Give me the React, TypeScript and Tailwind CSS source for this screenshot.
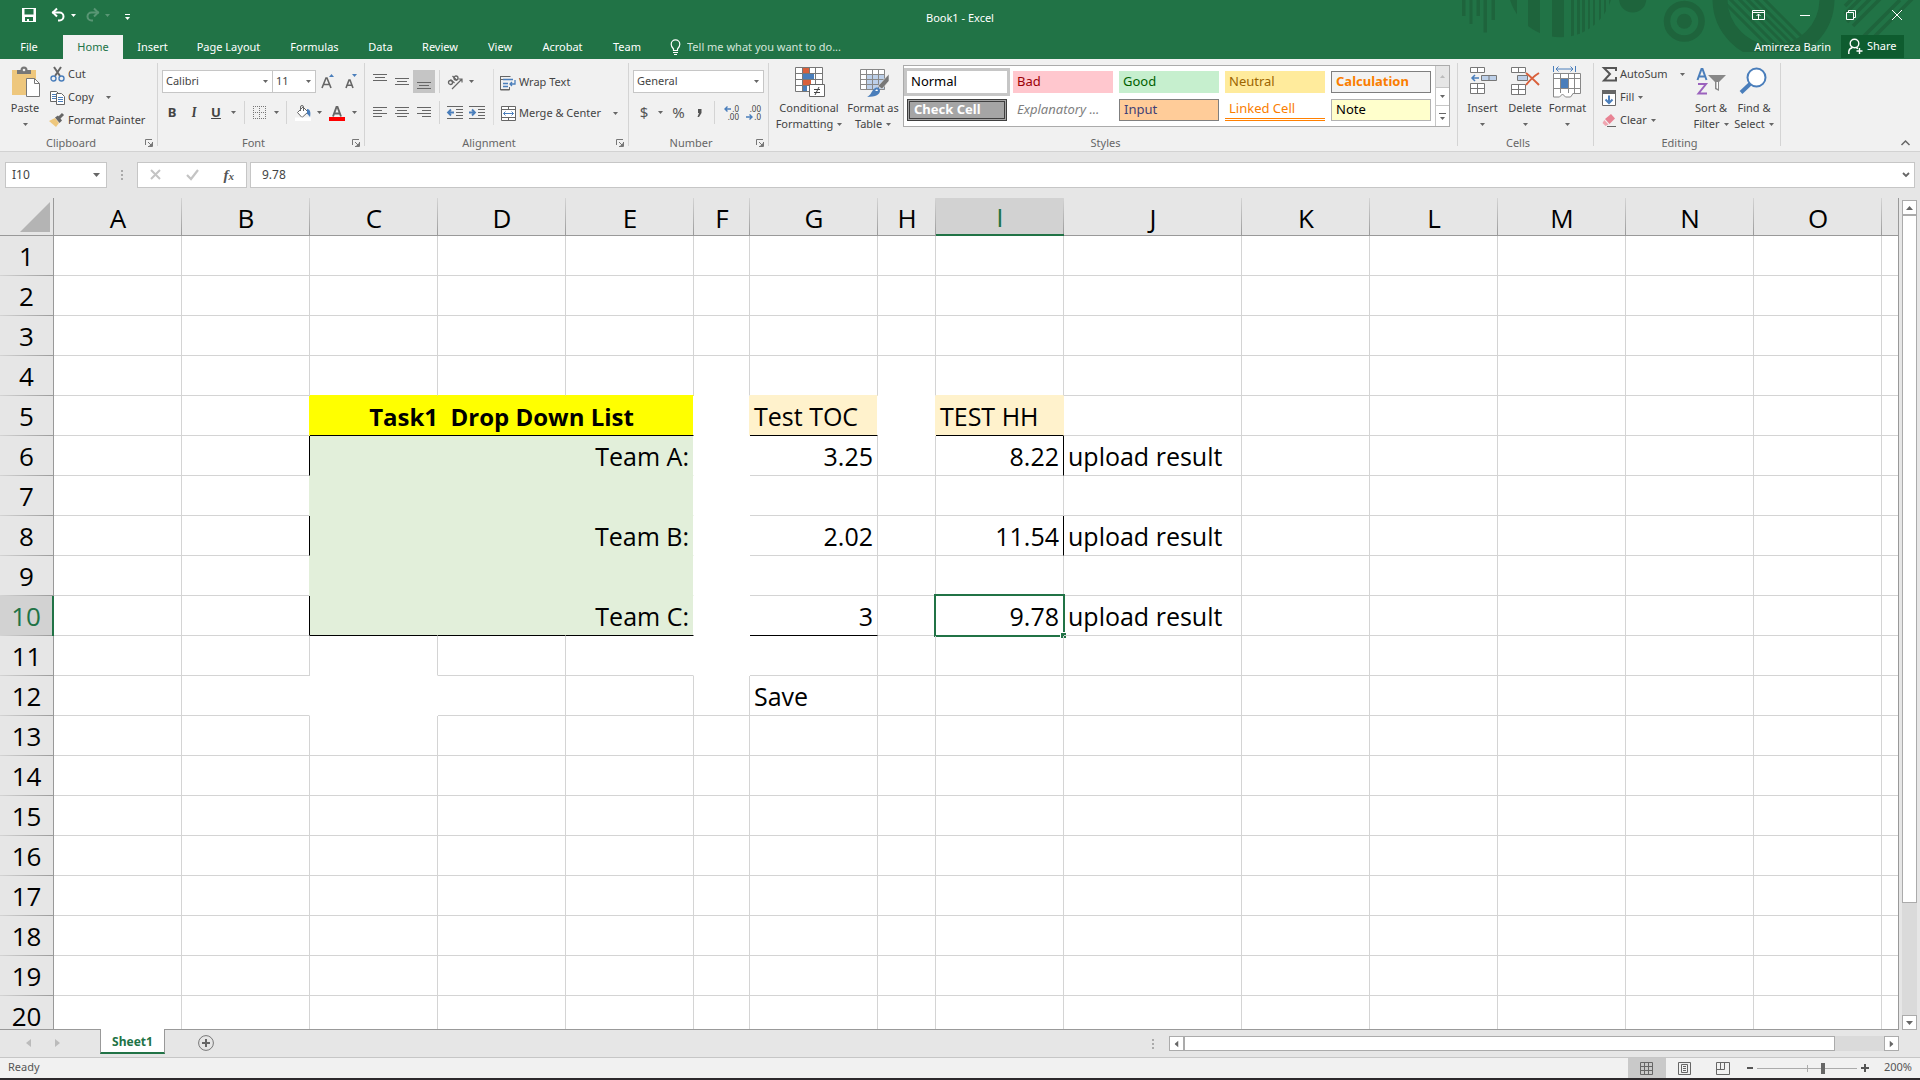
import React from 'react';
import type { ReactNode } from 'react';

/* ---------- small shared parts ---------- */

function Caret({ className = 'text-[#666]' }: { className?: string }) {
  return (
    <svg viewBox="0 0 5 3" className={`h-[3px] w-[5px] shrink-0 ${className}`} fill="currentColor" aria-hidden="true">
      <path d="M0 0h5L2.5 3z" />
    </svg>
  );
}

function Icon({ w, h, children }: { w: number; h: number; children: ReactNode }) {
  return (
    <svg width={w} height={h} viewBox={`0 0 ${w} ${h}`} fill="none" className="shrink-0 overflow-visible" aria-hidden="true">
      {children}
    </svg>
  );
}

function Tool({ label, className, children }: { label: string; className: string; children: ReactNode }) {
  return (
    <button type="button" aria-label={label} className={`flex h-[23px] shrink-0 items-center justify-center ${className}`}>
      {children}
    </button>
  );
}

function Sep({ className }: { className: string }) {
  return (
    <span className={`flex h-[23px] shrink-0 justify-center ${className}`}>
      <span className="w-px bg-[#d4d4d4]" />
    </span>
  );
}

function Group({
  name,
  width,
  launcher = false,
  children,
}: {
  name: string;
  width: string;
  launcher?: boolean;
  children: ReactNode;
}) {
  return (
    <section aria-label={name} className={`relative flex shrink-0 flex-col ${width}`}>
      <div className="flex h-[76px]">{children}</div>
      <div className="flex h-[16px] items-center justify-center pr-4 text-[#666]">{name}</div>
      {launcher && (
        <button type="button" aria-label={`${name} settings`} className="absolute right-[5px] bottom-[4px]">
          <Icon w={8} h={8}>
            <path d="M.5 6V.5H7M3 3l3 3M7.5 3v4.5H3" stroke="#777" />
            <path d="M7 4v3H4z" fill="#777" />
          </Icon>
        </button>
      )}
      <span className="absolute top-[4px] right-0 bottom-[5px] w-px bg-[#d4d4d4]" />
    </section>
  );
}

function BigButton({ icon, lines, width }: { icon: ReactNode; lines: string[]; width: string }) {
  return (
    <button type="button" className={`flex shrink-0 flex-col items-center pt-[8px] leading-4 whitespace-nowrap ${width}`}>
      <span className="mb-[3px] flex h-[30px] items-center justify-center">{icon}</span>
      <span>{lines[0]}</span>
      <span className="flex h-4 items-center gap-1">
        {lines[1]}
        <Caret />
      </span>
    </button>
  );
}

function RowButton({ icon, text, caret, gap = 'gap-1' }: { icon: ReactNode; text: string; caret?: boolean; gap?: string }) {
  return (
    <button type="button" className={`flex h-[23px] items-center whitespace-nowrap ${gap}`}>
      <span className="flex items-center gap-[3px]">
        <span className="flex w-4 justify-center">{icon}</span>
        {text}
      </span>
      {caret && <Caret />}
    </button>
  );
}

function Combo({ label, value, className }: { label: string; value: string; className: string }) {
  return (
    <span className={`relative flex h-[23px] shrink-0 items-center border border-[#c6c6c6] bg-white ${className}`}>
      <select aria-label={label} className="h-full w-full appearance-none bg-transparent pl-[3px] text-[#444]">
        <option>{value}</option>
      </select>
      <span className="pointer-events-none absolute right-[4px]">
        <Caret />
      </span>
    </span>
  );
}

function Lines({ d }: { d: string }) {
  return (
    <Icon w={15} h={15}>
      <path d={d} stroke="#666" />
    </Icon>
  );
}

/* ---------- title bar and tabs ---------- */

function TitleArt() {
  const stripes: [number, number][] = [
    [90, 7], [108, 12], [132, 12], [151, 3], [157, 3], [162, 3], [168, 2], [173, 2], [179, 2], [184, 2], [189, 2],
  ];
  return (
    <svg width="500" height="59" viewBox="0 0 500 59" className="pointer-events-none absolute top-0 right-0" aria-hidden="true">
      <defs>
        <clipPath id="disc"><circle cx="140.5" cy="-15.5" r="52.7" /></clipPath>
        <clipPath id="ring"><rect x="290" width="130" height="52" /></clipPath>
        <clipPath id="hole"><circle cx="353.5" cy="-1" r="46" /></clipPath>
      </defs>
      <g fill="#1e643c">
        <path d="M42 0h3.500v16H42zM49.500 0h3v24h-3zM56.500 0h3.500v16h-3.500zM63.500 0h3.500v32.500h-3.500zM71.500 0h3.500v20h-3.500z" />
        <g clipPath="url(#disc)">
          {stripes.map(([x, w]) => <rect key={x} x={x} width={w} height="40" />)}
        </g>
        <circle cx="212.700" cy="-1" r="13.600" />
        <circle cx="264.300" cy="21.300" r="7.500" />
      </g>
      <g stroke="#1e643c" fill="none">
        <circle cx="264.300" cy="21.300" r="17.300" strokeWidth="6.500" />
        <circle cx="353.500" cy="-1" r="53.500" strokeWidth="15" clipPath="url(#ring)" />
        <g clipPath="url(#hole)" strokeWidth="3">
          <path d="M300 -2l56 56M307 -4l56 56M316 -4l52 52M324 -4l50 50M332 -4l50 50M341 -4l50 50" />
        </g>
        <path d="M425 6l8-8M425 14l16-16M427 22l24-24M433 26l29-29" strokeWidth="3.500" />
        <path d="M442 38l38-38M455 36l38-38" strokeWidth="3.500" />
      </g>
    </svg>
  );
}

const tabs: [string, string][] = [
  ['Home', 'w-[60px] bg-[#f1f1f1] text-[#217346]'],
  ['Insert', 'w-[59px]'],
  ['Page Layout', 'w-[93px]'],
  ['Formulas', 'w-[79px]'],
  ['Data', 'w-[53px]'],
  ['Review', 'w-[66px]'],
  ['View', 'w-[54px]'],
  ['Acrobat', 'w-[71px]'],
  ['Team', 'w-[58px]'],
];

function TitleBar() {
  return (
    <header className="relative shrink-0 bg-[#217346] text-white">
      <TitleArt />
      <div className="relative grid h-[35px] grid-cols-3">
        <div className="flex items-start pt-[8px] pl-[22px]">
          <button type="button" aria-label="Save">
            <Icon w={14} h={14}>
              <path d="M0 0h14v14H0zM2.500 1v5.500h9V1zM3 9v4h2v-2h2v2h4V9z" fill="#fff" fillRule="evenodd" />
            </Icon>
          </button>
          <button type="button" aria-label="Undo" className="ml-[15px] flex">
            <Icon w={15} h={14}>
              <path d="M1 4.500h7.500a4 4 0 0 1 0 8H7" stroke="#fff" strokeWidth="2" />
              <path d="M6 .5L2 4.500l4 4" stroke="#fff" strokeWidth="2" />
            </Icon>
            <span className="mt-[6px] ml-[5px]"><Caret className="text-white" /></span>
          </button>
          <button type="button" aria-label="Redo" className="ml-[9px] flex opacity-25">
            <Icon w={15} h={14}>
              <path d="M14 4.500H6.500a4 4 0 0 0 0 8H8" stroke="#fff" strokeWidth="2" />
              <path d="M9 .5l4 4-4 4" stroke="#fff" strokeWidth="2" />
            </Icon>
            <span className="mt-[6px] ml-[5px]"><Caret className="text-white" /></span>
          </button>
          <button type="button" aria-label="Customize Quick Access Toolbar" className="mt-[6px] ml-[15px] flex flex-col gap-[2px]">
            <span className="h-px w-[5px] bg-white" />
            <Caret className="text-white" />
          </button>
        </div>
        <h1 className="self-center pt-px text-center text-[11px]">Book1 - Excel</h1>
        <div className="flex items-start justify-end pt-[8px] pr-[18px]">
          <button type="button" aria-label="Ribbon Display Options" className="flex w-[47px] justify-center">
            <Icon w={14} h={14}>
              <path d="M.5 2.500h12v9H.5zM.5 4.500h12M6.500 11V6M4.500 8l2-2 2 2" stroke="#fff" />
            </Icon>
          </button>
          <button type="button" aria-label="Minimize" className="flex w-[46px] justify-center">
            <Icon w={10} h={14}><path d="M0 7.500h10" stroke="#fff" /></Icon>
          </button>
          <button type="button" aria-label="Restore" className="flex w-[46px] justify-center">
            <Icon w={10} h={14}><path d="M.5 4.500h7v7h-7zM2.500 4V2.500h7v7H8" stroke="#fff" /></Icon>
          </button>
          <button type="button" aria-label="Close" className="ml-[18px] flex w-[10px] justify-center">
            <Icon w={10} h={14}><path d="M0 2l10 10M10 2L0 12" stroke="#fff" /></Icon>
          </button>
        </div>
      </div>
      <div className="relative flex h-[24px]">
        <nav aria-label="Ribbon tabs" className="flex">
          <button type="button" className="w-[63px] pr-[5px]">File</button>
          {tabs.map(([name, cls]) => (
            <button key={name} type="button" className={`shrink-0 ${cls}`}>{name}</button>
          ))}
        </nav>
        <label className="flex items-center gap-[6px] pl-[14px]">
          <Icon w={11} h={16}>
            <path d="M3.500 11.500V10C2 8.500 1.200 7 1.200 5.200a4.300 4.300 0 0 1 8.600 0C9.800 7 9 8.500 7.500 10v1.500zM3 13.500h5M4 15.500h3" stroke="#fff" strokeWidth="1.200" />
          </Icon>
          <input aria-label="Tell me what you want to do" placeholder="Tell me what you want to do..." className="w-[170px] bg-transparent placeholder:text-[#d3e5da] placeholder:opacity-100" />
        </label>
        <div className="ml-auto flex items-center pr-4">
          <button type="button" className="mr-[10px]">Amirreza Barin</button>
          <button type="button" className="flex h-[23px] w-[63px] items-center gap-[4px] self-start bg-[#0e5c2f] pl-[7px]">
            <Icon w={15} h={17}>
              <circle cx="6.500" cy="5.500" r="4.300" stroke="#fff" strokeWidth="1.400" />
              <path d="M.8 16v-2.500C1 11.500 2.500 10 4.500 9.500M8 9.500l2 1M11.500 10v6M8.500 13h6" stroke="#fff" strokeWidth="1.400" />
            </Icon>
            Share
          </button>
        </div>
      </div>
    </header>
  );
}

/* ---------- ribbon ---------- */

function ClipboardGroup() {
  return (
    <Group name="Clipboard" width="w-[158px]" launcher>
      <BigButton
        width="w-[49px] pl-px"
        lines={['Paste', '']}
        icon={
          <Icon w={28} h={30}>
            <path d="M1 3h24v25H1z" fill="#eec77d" />
            <path d="M6 7V3h3.500a3.500 3.500 0 0 1 7 0H20v4z" fill="#777" />
            <circle cx="13" cy="3" r="1.300" fill="#f1f1f1" />
            <path d="M15.500 11.500h8l5 5v13h-13z" fill="#fff" stroke="#777" />
            <path d="M23.500 11.500v5h5" stroke="#777" />
          </Icon>
        }
      />
      <div className="flex flex-col items-start pt-[4px]">
        <RowButton
          text="Cut"
          icon={
            <Icon w={15} h={15}>
              <path d="M4 0l6 9M11 0L5 9" stroke="#666" strokeWidth="2" />
              <circle cx="3.500" cy="11.500" r="2.500" stroke="#4a7ebb" strokeWidth="1.400" />
              <circle cx="11.500" cy="11.500" r="2.500" stroke="#4a7ebb" strokeWidth="1.400" />
            </Icon>
          }
        />
        <RowButton
          text="Copy"
          caret
          gap="gap-[12px]"
          icon={
            <Icon w={15} h={15}>
              <path d="M.5 1.500h6l2 2v8h-8z" fill="#fff" stroke="#666" />
              <path d="M2 4.500h4M2 6.500h4M2 8.500h4" stroke="#4a7ebb" />
              <path d="M6.500 3.500h5l3 3v8h-8z" fill="#fff" stroke="#666" />
              <path d="M8 7.500h5M8 9.500h5M8 11.500h5" stroke="#4a7ebb" />
            </Icon>
          }
        />
        <RowButton
          text="Format Painter"
          icon={
            <Icon w={16} h={15}>
              <path d="M0 8l6-3 4 5-3 4z" fill="#eec77d" />
              <path d="M6 4.500l3-2 4 5-2.500 2.500z" fill="#666" />
              <path d="M10 5l4-4" stroke="#666" strokeWidth="3" />
            </Icon>
          }
        />
      </div>
    </Group>
  );
}

function FontGroup() {
  return (
    <Group name="Font" width="w-[207px]" launcher>
      <div className="flex flex-col gap-[8px] pt-[11px] pl-[3px]">
        <div className="flex pl-px">
          <Combo label="Font" value="Calibri" className="w-[111px]" />
          <Combo label="Font size" value="11" className="-ml-px w-[44px]" />
          <Tool label="Increase font size" className="w-[24px]">
            <Icon w={14} h={15}>
              <path d="M1 14L5 4h1l4 10M2.500 10.500h6" stroke="#666" strokeWidth="1.600" />
              <path d="M8 3h5L10.500 0z" fill="#4a7ebb" />
            </Icon>
          </Tool>
          <Tool label="Decrease font size" className="w-[22px]">
            <Icon w={14} h={15}>
              <path d="M2 14l3-8h1l3 8M3 11.200h5" stroke="#666" strokeWidth="1.600" />
              <path d="M8 0h5l-2.500 3z" fill="#4a7ebb" />
            </Icon>
          </Tool>
        </div>
        <div className="flex text-[13px]">
          <Tool label="Bold" className="w-[22px] font-bold">B</Tool>
          <Tool label="Italic" className="w-[22px] font-serif font-bold italic">I</Tool>
          <Tool label="Underline" className="w-[22px] font-bold underline">U</Tool>
          <Tool label="Underline options" className="w-[13px]"><Caret /></Tool>
          <Sep className="w-[8px]" />
          <Tool label="Borders" className="w-[23px]">
            <Icon w={13} h={13}>
              <path d="M0 .5h13M0 6.500h13M0 12.500h13M.5 0v13M6.500 0v13M12.500 0v13" stroke="#777" strokeDasharray="1 1" />
            </Icon>
          </Tool>
          <Tool label="Border options" className="w-[10px]"><Caret /></Tool>
          <Sep className="w-[11px]" />
          <Tool label="Fill color" className="w-[22px]">
            <Icon w={16} h={16}>
              <path d="M2.500 7.500L8 2l5 5-6 5.500z" fill="#fff" stroke="#666" />
              <path d="M5.500 6V2a1.500 1.500 0 0 1 3 0v4" stroke="#666" />
              <path d="M12 4c3 0 4 3 3 8-1-1-2-3-3-3z" fill="#4a7ebb" />
              <path d="M0 12.500h16V16H0z" fill="#fff" />
            </Icon>
          </Tool>
          <Tool label="Fill color options" className="w-[11px]"><Caret /></Tool>
          <Tool label="Font color" className="w-[24px]">
            <Icon w={16} h={16}>
              <path d="M4 11.500L7.500 2h1L12 11.500M5.500 8.500h5" stroke="#666" strokeWidth="1.900" />
              <path d="M0 12h16v4H0z" fill="#f00" />
            </Icon>
          </Tool>
          <Tool label="Font color options" className="w-[10px]"><Caret /></Tool>
        </div>
      </div>
    </Group>
  );
}

function AlignmentGroup() {
  return (
    <Group name="Alignment" width="w-[264px]" launcher>
      <div className="flex w-[128px] flex-col gap-[8px] pt-[11px] pl-[4px]">
        <div className="flex">
          <Tool label="Top align" className="w-[22px]"><Lines d="M0 .5h14M2 3.500h10M0 6.500h14" /></Tool>
          <Tool label="Middle align" className="w-[22px]"><Lines d="M0 4.500h14M2 7.500h10M0 10.500h14" /></Tool>
          <Tool label="Bottom align" className="w-[22px] bg-[#c5c5c5]"><Lines d="M0 8.500h14M2 11.500h10M0 14.500h14" /></Tool>
          <Sep className="w-[8px]" />
          <Tool label="Orientation" className="w-[24px]">
            <Icon w={16} h={16}>
              <g stroke="#666" strokeWidth="1.300">
                <circle cx="3.500" cy="8.500" r="2" />
                <path d="M3.500 5.500l4 3.500M5.500 2l4.500 4.500" />
                <circle cx="9" cy="4" r="2" />
              </g>
              <path d="M5 15L15 5M11.500 5H15v3.500" stroke="#666" strokeWidth="1.200" />
            </Icon>
          </Tool>
          <Tool label="Orientation options" className="w-[8px]"><Caret /></Tool>
        </div>
        <div className="flex">
          <Tool label="Align left" className="w-[22px]"><Lines d="M0 2.500h14M0 5.500h9M0 8.500h14M0 11.500h9" /></Tool>
          <Tool label="Center" className="w-[22px]"><Lines d="M0 2.500h14M2 5.500h10M0 8.500h14M2 11.500h10" /></Tool>
          <Tool label="Align right" className="w-[22px]"><Lines d="M0 2.500h14M5 5.500h9M0 8.500h14M5 11.500h9" /></Tool>
          <Sep className="w-[8px]" />
          <Tool label="Decrease indent" className="w-[24px]">
            <Icon w={16} h={13}>
              <path d="M0 .5h16M9 3.500h7M9 6.500h7M9 9.500h7M0 12.500h16" stroke="#666" />
              <path d="M7 6.500H2M4 3.500l-3 3 3 3" stroke="#4a7ebb" strokeWidth="1.800" />
            </Icon>
          </Tool>
          <Tool label="Increase indent" className="w-[20px]">
            <Icon w={16} h={13}>
              <path d="M0 .5h16M9 3.500h7M9 6.500h7M9 9.500h7M0 12.500h16" stroke="#666" />
              <path d="M0 6.500h5M3 3.500l3 3-3 3" stroke="#4a7ebb" strokeWidth="1.800" />
            </Icon>
          </Tool>
        </div>
      </div>
      <div className="mt-[10px] mb-[10px] flex w-[134px] flex-col gap-[8px] border-l border-[#dcdcdc] pt-[2px] pl-[6px]">
        <RowButton
          text="Wrap Text"
          icon={
            <Icon w={16} h={16}>
              <path d="M.5 1.500h10M.5 4.500h10M.5 1v14h9v-3M.5 14.500h9" stroke="#666" />
              <path d="M3 4.500h10M3 8.500h5M3 11.500h5" stroke="#4a7ebb" strokeWidth="1.300" />
              <path d="M15 5v4h-5M12 7l-2 2 2 2" stroke="#4a7ebb" strokeWidth="1.300" />
            </Icon>
          }
        />
        <RowButton
          text="Merge & Center"
          caret
          gap="gap-[12px]"
          icon={
            <Icon w={15} h={15}>
              <path d="M.5.5h14v14H.5zM.5 3.500h14M.5 11.500h14M7.500 0v3.500M7.500 11.500V15" fill="#fff" stroke="#666" />
              <path d="M2.500 7.500h10M4.500 5.500l-2 2 2 2M10.500 5.500l2 2-2 2" stroke="#4a7ebb" />
            </Icon>
          }
        />
      </div>
    </Group>
  );
}

function DecimalTool({ label, dir }: { label: string; dir: 'left' | 'right' }) {
  const left = dir === 'left';
  return (
    <button type="button" aria-label={label} className="flex h-[23px] w-[22px] shrink-0 flex-col justify-center text-[8px] leading-[8px] text-[#444]">
      <span className="flex w-full items-center justify-end gap-px pr-[3px]">
        {left && <Icon w={7} h={6}><path d="M1 3h6M3.500 .5L1 3l2.500 2.500" stroke="#4a7ebb" strokeWidth="1.400" /></Icon>}
        {left ? '.0' : '.00'}
      </span>
      <span className="flex w-full items-center justify-end gap-px pr-[3px]">
        {!left && <Icon w={7} h={6}><path d="M0 3h6M3.500 .5L6 3 3.500 5.500" stroke="#4a7ebb" strokeWidth="1.400" /></Icon>}
        {left ? '.00' : '.0'}
      </span>
    </button>
  );
}

function NumberGroup() {
  return (
    <Group name="Number" width="w-[140px]" launcher>
      <div className="flex flex-col gap-[8px] pt-[11px] pl-[4px]">
        <Combo label="Number format" value="General" className="w-[131px]" />
        <div className="flex text-[15px] text-[#555]">
          <Tool label="Accounting format" className="w-[22px]">$</Tool>
          <Tool label="Accounting options" className="w-[11px]"><Caret /></Tool>
          <Tool label="Percent style" className="w-[25px]">%</Tool>
          <Tool label="Comma style" className="w-[17px]">
            <Icon w={5} h={8}><path d="M1 0h3.500v4L2 8H.5L2 4H1z" fill="#555" /></Icon>
          </Tool>
          <Sep className="w-[12px]" />
          <DecimalTool label="Increase decimal" dir="left" />
          <DecimalTool label="Decrease decimal" dir="right" />
        </div>
      </div>
    </Group>
  );
}

const styleCells: [string, string][] = [
  ['Normal', 'bg-white text-black outline-3 outline-[#c6c6c6]'],
  ['Bad', 'bg-[#ffc7ce] text-[#9c0006]'],
  ['Good', 'bg-[#c6efce] text-[#006100]'],
  ['Neutral', 'bg-[#ffeb9c] text-[#9c6500]'],
  ['Calculation', 'border border-[#7f7f7f] bg-[#f2f2f2] font-bold text-[#fa7d00] text-[12px]'],
  ['Check Cell', 'border-[3px] border-double border-[#3f3f3f] bg-[#a5a5a5] font-bold text-white text-[12px]'],
  ['Explanatory ...', 'bg-white text-[#7f7f7f] italic'],
  ['Input', 'border border-[#7f7f7f] bg-[#ffcc99] text-[#3f3f76]'],
  ['Linked Cell', 'border-b-[3px] border-double border-[#ff8001] text-[#fa7d00]'],
  ['Note', 'border border-[#b2b2b2] bg-[#ffffcc] text-black'],
];

function StylesGroup() {
  return (
    <Group name="Styles" width="w-[689px]">
      <div className="flex pl-[5px]">
        <BigButton
          width="w-[70px]"
          lines={['Conditional', 'Formatting']}
          icon={
            <Icon w={28} h={30}>
              <path d="M.5.5h27v24H.5z" fill="#fff" />
              <path d="M8 1h6v6H8zM8 13h8v5H8z" fill="#d9603b" />
              <path d="M8 7h11v6H8zM8 19h4v5H8z" fill="#4a7ebb" />
              <path d="M.5.5h27v24H.5zM.5 6.500h27M.5 12.500h27M.5 18.500h27M7.500.5v24M14.500.5v6M20.500.5v24" stroke="#777" />
              <path d="M14.500 17.500h15v12h-15z" fill="#fff" stroke="#666" />
              <path d="M19 22.500h6M19 25.500h6M24 20l-4 8" stroke="#444" />
            </Icon>
          }
        />
        <BigButton
          width="w-[58px]"
          lines={['Format as', 'Table']}
          icon={
            <Icon w={26} h={30}>
              <path d="M.5 2.500h24v20H.5z" fill="#fff" />
              <path d="M7 8h18v15H7z" fill="#bdd0e9" />
              <path d="M.5 2.500h24v20H.5zM.5 7.500h24M.5 12.500h24M.5 17.500h24M6.500 2.500v20M12.500 2.500v20M18.500 2.500v20" stroke="#888" />
              <path d="M29 7v7l-7 8-4-3z" fill="#777" stroke="#f1f1f1" strokeWidth=".6" />
              <path d="M14 22c3-3 6-1 6 2s-4 6-13 6c4-2 4-5 7-8z" fill="#4a7ebb" />
              <path d="M15 24l2-2 1 2z" fill="#fff" />
            </Icon>
          }
        />
        <div className="mt-[6px] ml-px flex h-[62px] border border-[#ababab] bg-white">
          <div className="grid w-[531px] grid-cols-[repeat(5,100px)] content-start gap-x-[6px] gap-y-[6px] pt-[5px] pl-[3px]">
            {styleCells.map(([name, cls]) => (
              <button key={name} type="button" className={`box-border flex h-[22px] items-center text-left text-[13px] whitespace-nowrap ${cls}`}>
                <span className="pl-[4px]">{name}</span>
              </button>
            ))}
          </div>
          <div className="flex w-[14px] flex-col border-l border-[#c6c6c6]">
            <button type="button" aria-label="Previous styles" className="flex h-[21px] items-center justify-center bg-[#e6e6e6]">
              <span className="rotate-180"><Caret className="text-[#bbb]" /></span>
            </button>
            <button type="button" aria-label="Next styles" className="flex h-[19px] items-center justify-center border-y border-[#c6c6c6]"><Caret /></button>
            <button type="button" aria-label="More styles" className="flex flex-1 flex-col items-center justify-center gap-[3px]">
              <span className="h-px w-[7px] bg-[#666]" />
              <Caret />
            </button>
          </div>
        </div>
      </div>
    </Group>
  );
}

function CellsGroup() {
  return (
    <Group name="Cells" width="w-[136px]">
      <div className="flex pl-[3px]">
        <BigButton
          width="w-[43px]"
          lines={['Insert', '']}
          icon={
            <Icon w={25} h={30}>
              <path d="M.5.500h14v5H.5zM7.500.5v5M.5 16.500h14v10H.5zM.5 21.500h14M7.500 16.500v10" fill="#fff" stroke="#777" />
              <path d="M11.500 8.500h15v5h-15zM19 8.500v5" fill="#bdd0e9" stroke="#777" />
              <path d="M9 11H2M5 8l-3 3 3 3" stroke="#4a7ebb" strokeWidth="1.500" />
            </Icon>
          }
        />
        <BigButton
          width="w-[42px]"
          lines={['Delete', '']}
          icon={
            <Icon w={28} h={30}>
              <path d="M.5.500h14v5H.5zM7.500.5v5M.5 17.500h14v10H.5zM.5 22.500h14M7.500 17.500v10" fill="#fff" stroke="#777" />
              <path d="M6.500 8.500h10v5h-10z" fill="#bdd0e9" stroke="#777" />
              <path d="M15 6c5 4 9 8 13 12M28 6c-5 3-9 7-13 12" stroke="#d9603b" strokeWidth="2" />
            </Icon>
          }
        />
        <BigButton
          width="w-[43px]"
          lines={['Format', '']}
          icon={
            <Icon w={29} h={32}>
              <path d="M.5 7.500h27v20H.5zM.5 12.500h27M.5 22.500h27M7.500 7.500v20M15.500 7.500v20M21.500 7.500v20" fill="#fff" stroke="#888" />
              <path d="M8 13h7v9H8z" fill="#4a7ebb" />
              <path d="M.5 27v4h6l3-3 3 3h5l3-4" fill="#fff" stroke="#888" />
              <path d="M.5 0v6M22.500 0v6M3 3h17M5.500.5L3 3l2.500 2.500M17.500.5L20 3l-2.500 2.500" stroke="#4a7ebb" />
            </Icon>
          }
        />
      </div>
    </Group>
  );
}

function EditingGroup() {
  return (
    <Group name="Editing" width="w-[187px]">
      <div className="flex w-[97px] flex-col items-start pt-[4px] pl-[7px]">
        <RowButton
          text="AutoSum"
          caret
          gap="gap-[12px]"
          icon={<Icon w={15} h={15}><path d="M14 4V1H2l6 6-6 6.500h12V10" stroke="#555" strokeWidth="2" /></Icon>}
        />
        <RowButton
          text="Fill"
          caret
          icon={
            <Icon w={14} h={16}>
              <path d="M.5.5h13v15H.5z" fill="#fff" stroke="#666" />
              <path d="M0 0h14v4H0z" fill="#666" />
              <path d="M7 5.500V13M3.500 9.500L7 13l3.500-3.500" stroke="#4a7ebb" strokeWidth="2" />
            </Icon>
          }
        />
        <RowButton
          text="Clear"
          caret
          icon={
            <Icon w={14} h={14}>
              <path d="M3 5l6-5 4 4.500L7.500 10z" fill="#e88393" />
              <path d="M2.300 6L6.500 10.500 3.500 12 .5 9z" fill="#f0a5b0" />
              <path d="M5 12.500h9" stroke="#666" />
            </Icon>
          }
        />
      </div>
      <BigButton
        width="w-[40px]"
        lines={['Sort &', 'Filter']}
        icon={
          <Icon w={30} h={30}>
            <path d="M1.500 13L5.500 2h1l4 11M3 9.500h6" stroke="#4a7ebb" strokeWidth="2" />
            <path d="M2 17h8L2.500 26.500H11" stroke="#9b62bd" strokeWidth="2" />
            <path d="M12 8h18l-7 7v9l-4-2v-7z" fill="#888" />
            <path d="M20.500 15h1.500v7l-1.500-1z" fill="#fff" />
          </Icon>
        }
      />
      <BigButton
        width="w-[46px]"
        lines={['Find &', 'Select']}
        icon={
          <Icon w={30} h={30}>
            <circle cx="17.500" cy="10.500" r="9" fill="#fff" stroke="#4a7ebb" strokeWidth="2" />
            <path d="M11 17l-9 8.500" stroke="#4a7ebb" strokeWidth="4" />
          </Icon>
        }
      />
    </Group>
  );
}

function Ribbon() {
  return (
    <div className="relative flex h-[93px] shrink-0 border-b border-[#d2d2d2] bg-[#f1f1f1]">
      <ClipboardGroup />
      <FontGroup />
      <AlignmentGroup />
      <NumberGroup />
      <StylesGroup />
      <CellsGroup />
      <EditingGroup />
      <button type="button" aria-label="Collapse the Ribbon" className="mr-[10px] mb-[5px] ml-auto self-end">
        <Icon w={9} h={6}><path d="M.5 5l4-4 4 4" stroke="#666" strokeWidth="1.500" /></Icon>
      </button>
    </div>
  );
}

/* ---------- formula bar ---------- */

function Dots() {
  return (
    <span className="flex flex-col gap-[2px]">
      <span className="size-[2px] bg-[#aaa]" />
      <span className="size-[2px] bg-[#aaa]" />
      <span className="size-[2px] bg-[#aaa]" />
    </span>
  );
}

function FormulaBar() {
  return (
    <div className="flex h-[46px] shrink-0 items-start pt-[10px] pr-[5px] pl-[5px]">
      <div className="flex h-[26px] w-[102px] items-center border border-[#c6c6c6] bg-white pr-[6px] pl-[6px]">
        <input aria-label="Name box" defaultValue="I10" className="w-full min-w-0 bg-transparent text-[12px]" />
        <svg viewBox="0 0 7 4" className="h-[4px] w-[7px] shrink-0" aria-hidden="true"><path d="M0 0h7L3.500 4z" fill="#666" /></svg>
      </div>
      <span className="flex h-[26px] w-[30px] items-center justify-center"><Dots /></span>
      <div className="flex h-[26px] w-[110px] items-center justify-around border border-[#c6c6c6] bg-white">
        <button type="button" aria-label="Cancel"><Icon w={12} h={12}><path d="M1 1l9 9M10 1l-9 9" stroke="#c4c4c4" strokeWidth="2" /></Icon></button>
        <button type="button" aria-label="Enter"><Icon w={13} h={12}><path d="M1 6l4 4L12 1" stroke="#c4c4c4" strokeWidth="2.200" /></Icon></button>
        <button type="button" aria-label="Insert function" className="font-['Liberation_Serif',serif] text-[15px] leading-4 font-bold text-[#555] italic">
          f<span className="text-[11px]">x</span>
        </button>
      </div>
      <div className="ml-[3px] flex h-[26px] flex-1 items-center border border-[#c6c6c6] bg-white pr-[4px] pl-[11px]">
        <input aria-label="Formula bar" defaultValue="9.78" className="min-w-0 flex-1 bg-transparent text-[12px]" />
        <button type="button" aria-label="Expand formula bar">
          <Icon w={8} h={6}><path d="M1 1l3 3 3-3" stroke="#666" strokeWidth="1.800" /></Icon>
        </button>
      </div>
    </div>
  );
}

/* ---------- sheet ---------- */

const columns: [string, string][] = [
  ['A', 'w-[128px]'], ['B', 'w-[128px]'], ['C', 'w-[128px]'], ['D', 'w-[128px]'], ['E', 'w-[128px]'],
  ['F', 'w-[56px]'], ['G', 'w-[128px]'], ['H', 'w-[58px]'], ['I', 'w-[128px]'], ['J', 'w-[178px]'],
  ['K', 'w-[128px]'], ['L', 'w-[128px]'], ['M', 'w-[128px]'], ['N', 'w-[128px]'], ['O', 'w-[128px]'],
];

type Cell = { text?: string; look?: string; right?: string; bottom?: string; span?: number };

const green = 'bg-[#e2efda]';
const greenR = 'border-r-[#e2efda]';
const greenB = 'border-b-[#e2efda]';
const cream = 'bg-[#fff2cc]';
const whiteR = 'border-r-white';
const whiteB = 'border-b-white';
const blackR = 'border-r-black';
const blackB = 'border-b-black';

const cells: Record<string, Cell> = {
  C4: { bottom: 'border-b-[#ffff00]' },
  D4: { bottom: 'border-b-[#ffff00]' },
  E4: { bottom: 'border-b-[#ffff00]' },
  F4: { bottom: whiteB },
  G4: { bottom: 'border-b-[#fff2cc]' },
  H4: { bottom: whiteB },
  I4: { bottom: 'border-b-[#fff2cc]' },
  B5: { right: 'border-r-[#ffff00]' },
  C5: { text: 'Task1  Drop Down List', look: 'bg-[#ffff00] text-center text-[24px] font-bold', span: 3, right: whiteR, bottom: blackB },
  F5: { right: 'border-r-[#fff2cc]', bottom: whiteB },
  G5: { text: 'Test TOC', look: cream, right: whiteR, bottom: blackB },
  H5: { right: 'border-r-[#fff2cc]', bottom: whiteB },
  I5: { text: 'TEST HH', look: cream, right: 'border-r-[#fff2cc]', bottom: blackB },
  G6: { text: '3.25', look: 'text-right' },
  I6: { text: '8.22', look: 'text-right', right: blackR },
  J6: { text: 'upload result' },
  G8: { text: '2.02', look: 'text-right' },
  I8: { text: '11.54', look: 'text-right', right: blackR },
  J8: { text: 'upload result' },
  G10: { text: '3', look: 'text-right', bottom: blackB },
  I10: { text: '9.78', look: 'text-right' },
  J10: { text: 'upload result' },
  C11: { bottom: whiteB },
  E11: { right: whiteR },
  F11: { right: whiteR, bottom: whiteB },
  B12: { right: whiteR },
  C12: { right: whiteR, bottom: whiteB },
  G12: { text: 'Save' },
};

const teams: Record<number, string> = { 6: 'Team A:', 8: 'Team B:', 10: 'Team C:' };
for (let r = 6; r <= 10; r++) {
  const bottom = r === 10 ? blackB : greenB;
  cells[`B${r}`] = { right: teams[r] ? blackR : greenR };
  cells[`C${r}`] = { look: green, right: greenR, bottom };
  cells[`D${r}`] = { look: green, right: greenR, bottom };
  cells[`E${r}`] = { text: teams[r], look: 'bg-[#e2efda] text-right', right: whiteR, bottom };
  cells[`F${r}`] = { right: whiteR, bottom: whiteB };
}

const rows = Array.from({ length: 20 }, (_, i) => i + 1);

function SheetRow({ row }: { row: number }) {
  const active = row === 10;
  let skip = 0;
  return (
    <tr className="h-[40px]">
      <th
        scope="row"
        className={`border-r bg-[linear-gradient(to_right,#d4d4d4,#9b9b9b)] bg-[length:100%_1px] bg-bottom bg-no-repeat p-0 text-[26px] leading-[39px] font-normal ${
          active ? 'border-r-2 border-[#217346] bg-[#d2d2d2] text-[#217346]' : 'border-[#999] bg-[#e6e6e6]'
        }`}
      >
        {row}
      </th>
      {columns.map(([col]) => {
        if (skip > 0) {
          skip--;
          return null;
        }
        const key = `${col}${row}`;
        const c = cells[key] ?? {};
        if (c.span) skip = c.span - 1;
        return (
          <td
            key={col}
            colSpan={c.span}
            className={`relative border-r border-b px-[4px] pt-[2px] pb-0 leading-[37px] whitespace-pre ${c.right ?? 'border-r-[#d4d4d4]'} ${
              c.bottom ?? 'border-b-[#d4d4d4]'
            } ${c.look ?? ''}`}
          >
            {c.text}
            {key === 'I10' && (
              <>
                <span className="absolute -inset-[2px] border-2 border-[#217346]" />
                <span className="absolute -right-[3px] -bottom-[3px] size-[6px] border-t border-l border-white bg-[#217346]" />
              </>
            )}
          </td>
        );
      })}
      <td className="border-b border-b-[#d4d4d4] p-0" />
    </tr>
  );
}

function ScrollButton({ label, turn, className }: { label: string; turn: string; className: string }) {
  return (
    <button type="button" aria-label={label} className={`flex shrink-0 items-center justify-center border border-[#ababab] bg-white ${className}`}>
      <svg viewBox="0 0 7 4" className={`h-[4px] w-[7px] ${turn}`} aria-hidden="true"><path d="M0 0h7L3.500 4z" fill="#666" /></svg>
    </button>
  );
}

function Sheet() {
  return (
    <main className="flex min-h-0 flex-1">
      <div className="min-w-0 flex-1 overflow-hidden border-r border-b border-[#999]">
        <table className="w-full table-fixed border-separate border-spacing-0 bg-white text-[25px] text-black">
          <colgroup>
            <col className="w-[54px]" />
            {columns.map(([c, w]) => <col key={c} className={w} />)}
            <col />
          </colgroup>
          <thead>
            <tr className="h-[38px] text-[26px] leading-[34px]">
              <th className="border-r border-b border-[#999] bg-[#e6e6e6] p-0">
                <button type="button" aria-label="Select all" className="flex h-[37px] w-full items-end justify-end pr-[3px] pb-[3px]">
                  <Icon w={30} h={30}><path d="M30 0v30H0z" fill="#b4b4b4" /></Icon>
                </button>
              </th>
              {columns.map(([c]) => (
                <th
                  key={c}
                  scope="col"
                  className={`bg-[linear-gradient(#d4d4d4,#9b9b9b)] bg-[length:1px_100%] bg-right bg-no-repeat p-0 pt-[2px] font-normal ${
                    c === 'I' ? 'border-b-2 border-[#217346] bg-[#d2d2d2] text-[#217346]' : 'border-b border-[#999] bg-[#e6e6e6]'
                  }`}
                >
                  {c}
                </th>
              ))}
              <th className="border-b border-[#999] bg-[#e6e6e6] p-0" />
            </tr>
          </thead>
          <tbody>
            {rows.map((r) => <SheetRow key={r} row={r} />)}
          </tbody>
        </table>
      </div>
      <div className="flex w-[21px] shrink-0 flex-col items-start pt-[2px] pl-[3px]">
        <ScrollButton label="Scroll up" turn="rotate-180" className="h-[15px] w-[15px]" />
        <div className="w-[15px] flex-1 bg-[#dadada]">
          <div className="h-[86%] border border-[#ababab] bg-white" />
        </div>
        <ScrollButton label="Scroll down" turn="" className="h-[15px] w-[15px]" />
      </div>
    </main>
  );
}

/* ---------- sheet tabs and status bar ---------- */

function SheetTabs() {
  return (
    <div className="flex h-[27px] shrink-0 items-start">
      <div className="flex h-[26px] w-[100px] items-center pl-[26px]">
        <button type="button" aria-label="Previous sheet"><Icon w={5} h={8}><path d="M5 0v8L0 4z" fill="#bbb" /></Icon></button>
        <button type="button" aria-label="Next sheet" className="ml-[24px]"><Icon w={5} h={8}><path d="M0 0v8l5-4z" fill="#bbb" /></Icon></button>
      </div>
      <button type="button" className="-mt-px h-[25px] w-[65px] border-x border-b-2 border-x-[#999] border-b-[#217346] bg-white pt-[3px] text-[12px] font-bold text-[#217346]">
        Sheet1
      </button>
      <button type="button" aria-label="New sheet" className="mt-[5px] ml-[33px]">
        <Icon w={16} h={16}>
          <circle cx="8" cy="8" r="7.400" stroke="#777" />
          <path d="M8 4v8M4 8h8" stroke="#666" strokeWidth="2" />
        </Icon>
      </button>
      <div className="ml-auto flex w-[768px] items-center pt-[6px] pr-[21px]">
        <span className="mr-[15px]"><Dots /></span>
        <ScrollButton label="Scroll left" turn="rotate-90" className="h-[15px] w-[15px]" />
        <div className="h-[15px] flex-1 bg-[#dadada]">
          <div className="h-full w-[93%] border border-[#ababab] bg-white" />
        </div>
        <ScrollButton label="Scroll right" turn="-rotate-90" className="h-[15px] w-[15px]" />
      </div>
    </div>
  );
}

function StatusBar() {
  return (
    <footer className="flex h-[23px] shrink-0 items-center border-t border-b-2 border-t-[#c6c6c6] border-b-[#2d292c] bg-[#f1f1f1] pl-[8px] text-[#555]">
      <span className="pb-px">Ready</span>
      <div className="ml-auto flex h-full items-center">
        <button type="button" aria-label="Normal view" className="flex h-full w-[38px] items-center justify-center bg-[#c9c9c9]">
          <Icon w={14} h={13}><path d="M.5.5h12v12H.5zM.5 4.500h12M.5 8.500h12M4.500.5v12M8.500.5v12" stroke="#666" /></Icon>
        </button>
        <button type="button" aria-label="Page layout view" className="flex h-full w-[38px] items-center justify-center">
          <Icon w={14} h={13}><path d="M.5.5h12v12H.5zM3.500 2.500h6v8h-6zM5 4.500h3M5 6.500h3M5 8.500h3" stroke="#666" /></Icon>
        </button>
        <button type="button" aria-label="Page break preview" className="flex h-full w-[38px] items-center justify-center">
          <Icon w={14} h={13}><path d="M.5.5h13v12H.5zM.5 7.500h8V.5M4.500.5v7" stroke="#666" /></Icon>
        </button>
        <button type="button" aria-label="Zoom out" className="mx-[4px] flex w-[7px] justify-center"><span className="h-[2px] w-[6px] bg-[#555]" /></button>
        <input
          type="range"
          aria-label="Zoom"
          min="0"
          max="100"
          defaultValue="67"
          className="h-[12px] w-[100px] appearance-none bg-[linear-gradient(#ababab,#ababab),linear-gradient(#ababab,#ababab)] bg-[length:100%_1px,1px_7px] bg-center bg-no-repeat [&::-webkit-slider-thumb]:h-[11px] [&::-webkit-slider-thumb]:w-[4px] [&::-webkit-slider-thumb]:appearance-none [&::-webkit-slider-thumb]:bg-[#666]"
        />
        <button type="button" aria-label="Zoom in" className="ml-[3px] flex w-[10px] justify-center"><Icon w={8} h={8}><path d="M4 0v8M0 4h8" stroke="#555" strokeWidth="2" /></Icon></button>
        <button type="button" className="w-[50px] pr-[8px] pb-px text-right">200%</button>
      </div>
    </footer>
  );
}

export default function App() {
  return (
    <div className="flex h-screen min-w-[1800px] flex-col overflow-hidden bg-[#e6e6e6] font-['Noto_Sans','Open_Sans',sans-serif] text-[11px] text-[#444]">
      <TitleBar />
      <Ribbon />
      <FormulaBar />
      <div className="flex min-h-0 flex-1 flex-col font-['Open_Sans','Noto_Sans',sans-serif]">
        <Sheet />
      </div>
      <SheetTabs />
      <StatusBar />
    </div>
  );
}
